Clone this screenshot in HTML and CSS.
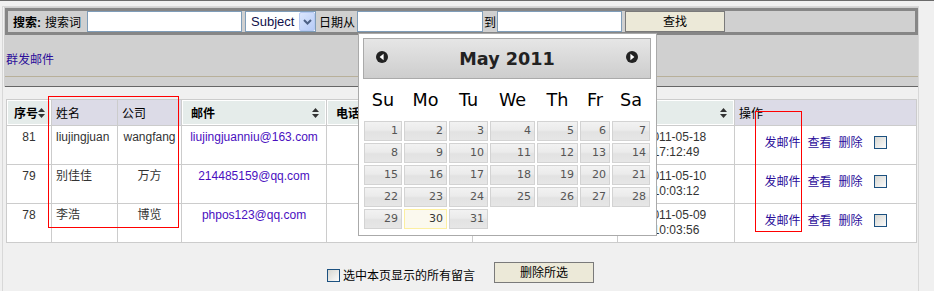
FILE: index.html
```html
<!DOCTYPE html>
<html lang="zh-CN">

<head>
    <meta charset="UTF-8" />
    <title>留言邮件管理</title>
    <link rel="stylesheet" href="styles.css">
</head>

<body>
    <div class="wrap">
        <div class="top-panel">
            <form class="search-bar">
                <b class="search-title">搜索:</b>
                <span class="lbl kw-lbl">搜索词</span>
                <input type="text" class="txt kw" />
                <span class="sel">
                    <select class="field">
                        <option>Subject</option>
                        <option>Email</option>
                    </select>
                    <span class="sel-btn">
                        <svg width="9" height="6" viewBox="0 0 9 6"><path d="M1 1l3.5 3.5L8 1" fill="none" stroke="#4d6185" stroke-width="2" /></svg>
                    </span>
                </span>
                <span class="lbl date-lbl">日期从</span>
                <input type="text" class="txt date-from" />
                <span class="lbl to-lbl">到</span>
                <input type="text" class="txt date-to" />
                <button type="button" class="btn find-btn">查找</button>
            </form>
            <div class="actions"><a href="#">群发邮件</a></div>
            <div class="sep"></div>
        </div>

        <table class="list">
            <colgroup>
                <col style="width:45px">
                <col style="width:66px">
                <col style="width:64px">
                <col style="width:145px">
                <col style="width:146px">
                <col style="width:145px">
                <col style="width:117px">
                <col style="width:182px">
            </colgroup>
            <thead>
                <tr>
                    <th class="sort first"><div class="th-in"><span>序号</span><svg width="7" height="10" viewBox="0 0 7 10"><path d="M3.5 0L7 4H0z M0 6h7L3.5 10z" fill="#333" /></svg></div></th>
                    <th class="plain">姓名</th>
                    <th class="plain">公司</th>
                    <th class="sort"><div class="th-in"><span>邮件</span><svg width="7" height="10" viewBox="0 0 7 10"><path d="M3.5 0L7 4H0z M0 6h7L3.5 10z" fill="#333" /></svg></div></th>
                    <th class="sort"><div class="th-in"><span>电话</span></div></th>
                    <th class="sort"><div class="th-in"></div></th>
                    <th class="sort"><div class="th-in"><span></span><svg width="7" height="10" viewBox="0 0 7 10"><path d="M3.5 0L7 4H0z M0 6h7L3.5 10z" fill="#333" /></svg></div></th>
                    <th class="plain">操作</th>
                </tr>
            </thead>
            <tbody>
                <tr>
                    <td class="c">81</td>
                    <td>liujingjuan</td>
                    <td class="c">wangfang</td>
                    <td class="c"><a href="#" class="mail">liujingjuanniu@163.com</a></td>
                    <td class="c"></td>
                    <td></td>
                    <td class="c">2011-05-18<br>17:12:49</td>
                    <td class="c ops"><a href="#">发邮件</a><a href="#">查看</a><a href="#">删除</a><input type="checkbox" class="chk" /></td>
                </tr>
                <tr>
                    <td class="c">79</td>
                    <td>别佳佳</td>
                    <td class="c">万方</td>
                    <td class="c"><a href="#" class="mail">214485159@qq.com</a></td>
                    <td class="c"></td>
                    <td></td>
                    <td class="c">2011-05-10<br>10:03:12</td>
                    <td class="c ops"><a href="#">发邮件</a><a href="#">查看</a><a href="#">删除</a><input type="checkbox" class="chk" /></td>
                </tr>
                <tr>
                    <td class="c">78</td>
                    <td>李浩</td>
                    <td class="c">博览</td>
                    <td class="c"><a href="#" class="mail">phpos123@qq.com</a></td>
                    <td class="c"></td>
                    <td></td>
                    <td class="c">2011-05-09<br>10:03:56</td>
                    <td class="c ops"><a href="#">发邮件</a><a href="#">查看</a><a href="#">删除</a><input type="checkbox" class="chk" /></td>
                </tr>
            </tbody>
        </table>

        <div class="footer">
            <label class="check-all"><input type="checkbox" class="chk" />选中本页显示的所有留言</label>
            <button type="button" class="btn del-btn">删除所选</button>
        </div>

        <!-- date picker popup -->
        <div class="datepicker">
            <div class="dp-header">
                <a href="#" class="dp-prev"><svg width="12" height="12" viewBox="0 0 12 12"><circle cx="6" cy="6" r="6" fill="#222" /><path d="M7.6 2.8v6.4L3.6 6z" fill="#fff" /></svg></a>
                <span class="dp-title">May 2011</span>
                <a href="#" class="dp-next"><svg width="12" height="12" viewBox="0 0 12 12"><circle cx="6" cy="6" r="6" fill="#222" /><path d="M4.4 2.8v6.4L8.4 6z" fill="#fff" /></svg></a>
            </div>
            <table class="dp-cal">
                <colgroup>
                    <col style="width:40px">
                    <col style="width:45px">
                    <col style="width:41px">
                    <col style="width:47px">
                    <col style="width:43px">
                    <col style="width:32px">
                    <col style="width:40px">
                </colgroup>
                <thead>
                    <tr><th>Su</th><th>Mo</th><th>Tu</th><th>We</th><th>Th</th><th>Fr</th><th>Sa</th></tr>
                </thead>
                <tbody>
                    <tr><td><a href="#">1</a></td><td><a href="#">2</a></td><td><a href="#">3</a></td><td><a href="#">4</a></td><td><a href="#">5</a></td><td><a href="#">6</a></td><td><a href="#">7</a></td></tr>
                    <tr><td><a href="#">8</a></td><td><a href="#">9</a></td><td><a href="#">10</a></td><td><a href="#">11</a></td><td><a href="#">12</a></td><td><a href="#">13</a></td><td><a href="#">14</a></td></tr>
                    <tr><td><a href="#">15</a></td><td><a href="#">16</a></td><td><a href="#">17</a></td><td><a href="#">18</a></td><td><a href="#">19</a></td><td><a href="#">20</a></td><td><a href="#">21</a></td></tr>
                    <tr><td><a href="#">22</a></td><td><a href="#">23</a></td><td><a href="#">24</a></td><td><a href="#">25</a></td><td><a href="#">26</a></td><td><a href="#">27</a></td><td><a href="#">28</a></td></tr>
                    <tr><td><a href="#">29</a></td><td><a href="#" class="today">30</a></td><td><a href="#">31</a></td><td></td><td></td><td></td><td></td></tr>
                </tbody>
            </table>
        </div>

        <!-- red annotation boxes -->
        <div class="mark mark-name"></div>
        <div class="mark mark-ops"></div>
    </div>
</body>

</html>
```

FILE: styles.css
```css
* {
    box-sizing: border-box;
}

body {
    margin: 0;
    background: #f0f0f0;
    border-top: 1px solid #6b6b6b;
    font-family: "Liberation Sans", "Noto Sans CJK SC", sans-serif;
    font-size: 12px;
    color: #333;
}

a {
    color: #2c0e9a;
    text-decoration: none;
}

.wrap {
    position: relative;
    width: 917px;
    min-height: 285px;
    margin: 5px 0 0 2px;
    border: 1px solid #d8d8d8;
    border-bottom: none;
}

/* top gray panel */
.top-panel {
    margin-left: 1px;
    padding: 1px 0 0 1px;
    background: #d0d0d0;
}

.search-bar {
    display: flex;
    align-items: center;
    height: 27px;
    margin: 0;
    padding-left: 5px;
    border: 3px solid #868686;
    color: #000;
}

.search-title {
    font-weight: bold;
}

.lbl {
    white-space: nowrap;
}

.kw-lbl {
    margin-left: 4px;
}

.txt {
    height: 21px;
    padding: 0 3px;
    border: 1px solid #7f9db9;
    background: #fff;
    font: 12px "Liberation Sans", sans-serif;
}

.kw {
    width: 155px;
    margin-left: 6px;
}

.sel {
    position: relative;
    width: 71px;
    height: 21px;
    margin-left: 3px;
}

.field {
    appearance: none;
    width: 100%;
    height: 21px;
    padding: 0 0 0 5px;
    border: 1px solid #7f9db9;
    border-radius: 0;
    background: #fff;
    color: #10104a;
    font: 13px "Liberation Sans", sans-serif;
}

.sel-btn {
    position: absolute;
    top: 1px;
    right: 1px;
    width: 16px;
    height: 19px;
    display: flex;
    align-items: center;
    justify-content: center;
    border: 1px solid #b6c9f2;
    border-radius: 2px;
    background: linear-gradient(135deg, #dbe6fd, #b6cbf7);
}

.date-lbl {
    margin-left: 3px;
}

.date-from {
    width: 126px;
    margin-left: 2px;
}

.to-lbl {
    margin-left: 1px;
}

.date-to {
    width: 125px;
    margin-left: 1px;
}

.btn {
    height: 21px;
    padding: 0 0 5px;
    line-height: 14px;
    border: 1px solid #7a7a7a;
    border-radius: 0;
    background: #ece9d8;
    color: #000;
    font: 12px "Noto Sans CJK SC", sans-serif;
}

.find-btn {
    width: 100px;
    margin-left: 3px;
}

.actions {
    height: 42px;
    padding: 18px 0 0 1px;
    line-height: 14px;
    border-bottom: 1px solid #b8b09a;
}

.sep {
    height: 10px;
    border-bottom: 1px solid #666;
}

/* list table */
.list {
    width: 910px;
    margin: 12px 0 0 3px;
    border-collapse: collapse;
    table-layout: fixed;
    background: #fff;
}

.list th,
.list td {
    border: 1px solid #cccccc;
}

.list th {
    height: 26px;
    padding: 0;
    text-align: left;
    color: #000;
}

.list th.sort {
    background: #e5ecea;
    box-shadow: inset 1px 1px 0 #fff, inset -1px -1px 0 #fff;
    font-weight: bold;
}

.list th.plain {
    padding-left: 4px;
    background: #dcdbe7;
    font-weight: normal;
}

.th-in {
    display: flex;
    align-items: center;
    justify-content: space-between;
    padding: 0 7px 0 9px;
}

.list th.first .th-in {
    padding: 0 6px 0 7px;
}

.list td {
    height: 39px;
    padding: 4px 4px 0;
    vertical-align: top;
    line-height: 15px;
    white-space: nowrap;
    overflow: hidden;
}

.list td.c {
    text-align: center;
}

.list .mail {
    color: #4a0fbf;
}

.ops {
    padding-top: 10px !important;
}

.ops a {
    margin-left: 7px;
}

.ops a:first-child {
    margin-left: 0;
}

.chk {
    appearance: none;
    width: 13px;
    height: 13px;
    margin: 0 0 0 11px;
    vertical-align: -2px;
    border: 1px solid #1c5180;
    background: linear-gradient(135deg, #d6d6d0, #fbfbfb);
}

/* footer */
.footer {
    display: flex;
    justify-content: center;
    align-items: flex-end;
    gap: 19px;
    margin-top: 19px;
}

.check-all {
    display: flex;
    align-items: center;
    margin-bottom: 1px;
    color: #000;
    font-family: "Noto Sans CJK SC", sans-serif;
    line-height: 14px;
}

.check-all .chk {
    margin: 0 3px 0 0;
}

.del-btn {
    width: 100px;
}

/* datepicker */
.datepicker {
    position: absolute;
    left: 355px;
    top: 26px;
    width: 299px;
    padding: 4px 5px 5px 4px;
    border: 1px solid #aaa;
    background: #fff;
    font-family: "DejaVu Sans", Verdana, sans-serif;
}

.dp-header {
    display: flex;
    align-items: center;
    justify-content: space-between;
    height: 41px;
    padding: 0 12px;
    border: 1px solid #aaa;
    background: linear-gradient(#e6e6e6, #cdcdcd);
}

.dp-prev,
.dp-next {
    display: flex;
    margin-top: -4px;
}

.dp-title {
    color: #222;
    font-size: 17.6px;
    font-weight: bold;
}

.dp-cal {
    width: 288px;
    border-collapse: collapse;
    table-layout: fixed;
}

.dp-cal th {
    height: 41px;
    padding: 0;
    color: #000;
    font-size: 17.6px;
    font-weight: normal;
    text-align: center;
}

.dp-cal td {
    height: 22px;
    padding: 1px;
}

.dp-cal td a {
    display: block;
    height: 20px;
    padding: 0 3px;
    line-height: 18px;
    text-align: right;
    border: 1px solid #d3d3d3;
    background: linear-gradient(#f2f2f2, #ebebeb 45%, #e2e2e2 55%, #e6e6e6);
    color: #555;
    font-size: 11px;
}

.dp-cal td a.today {
    border-color: #fcefa1;
    background: #fbf9ee;
    color: #363636;
}

/* annotation boxes */
.mark {
    position: absolute;
    border: 1px solid #f00;
}

.mark-name {
    left: 45px;
    top: 89px;
    width: 131px;
    height: 132px;
}

.mark-ops {
    left: 752px;
    top: 104px;
    width: 47px;
    height: 121px;
}
```
